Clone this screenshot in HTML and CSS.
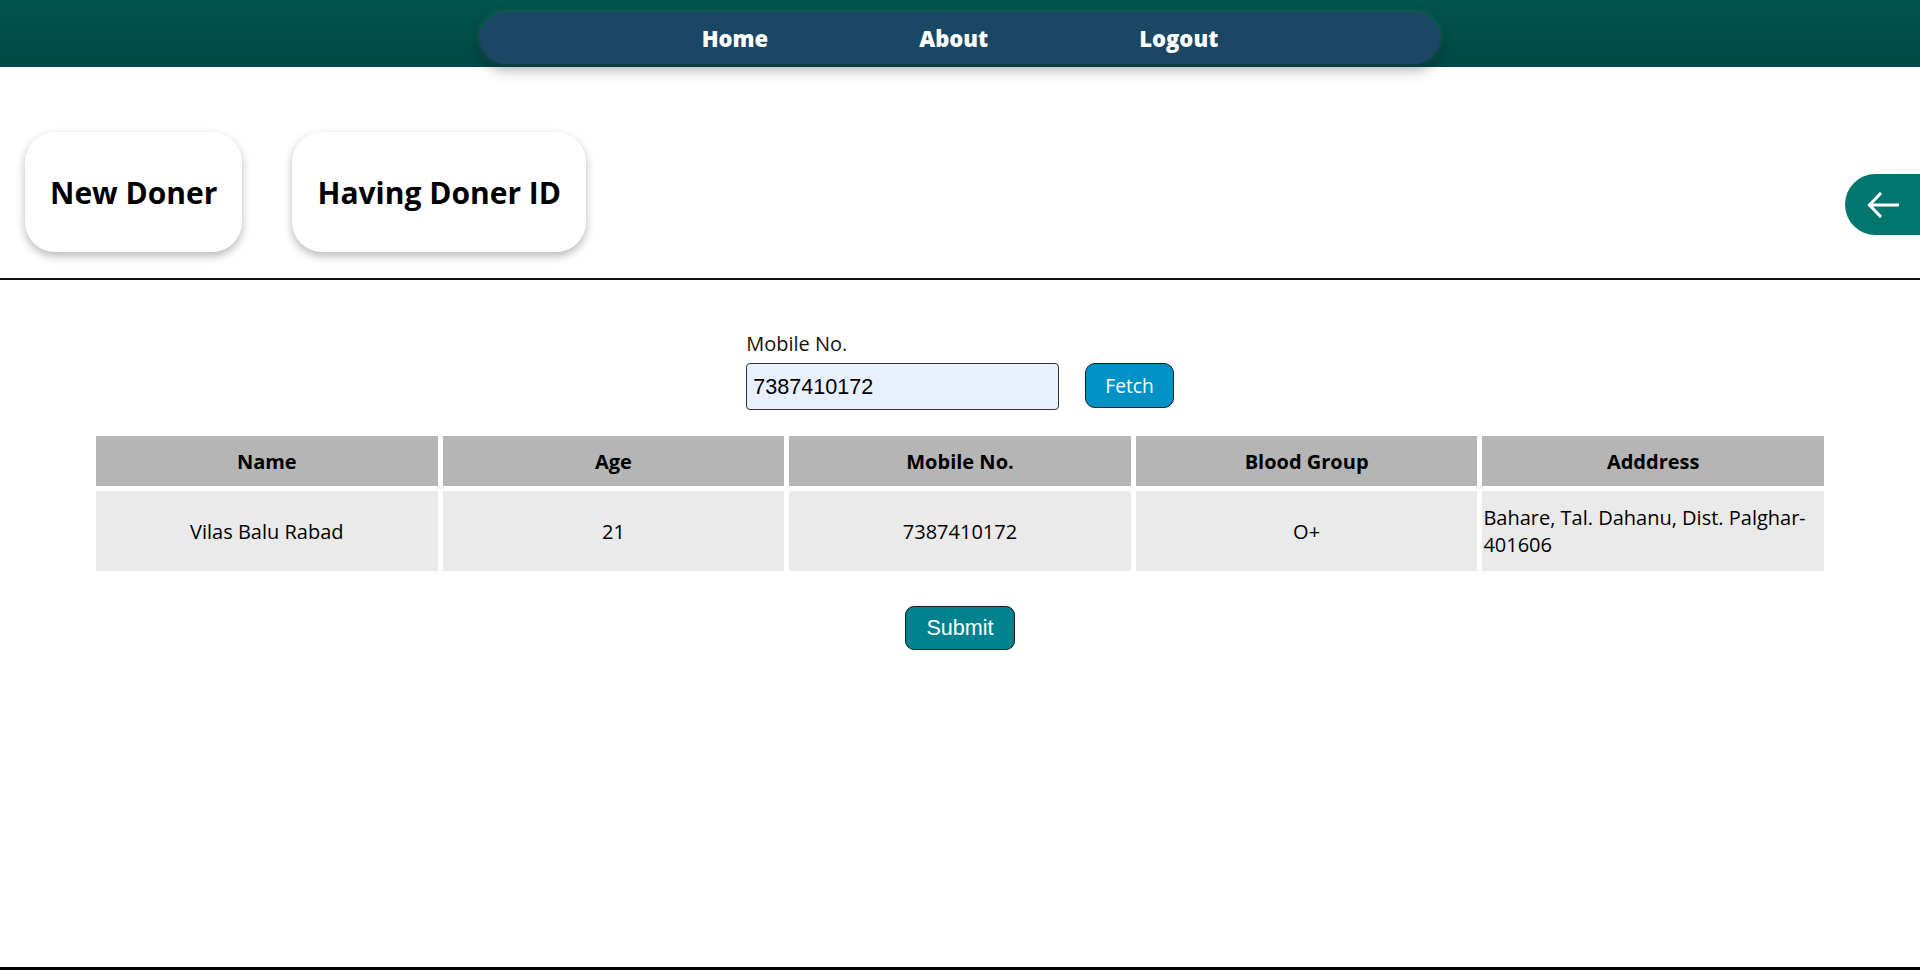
FILE: index.html
```html
<!DOCTYPE html>
<html lang="en">
<head>
<meta charset="utf-8">
<title>Doner</title>
<link rel="stylesheet" href="styles.css">
</head>
<body>
<header class="topbar">
  <nav class="nav-pill">
    <a href="#" class="nav-link">Home</a>
    <a href="#" class="nav-link">About</a>
    <a href="#" class="nav-link">Logout</a>
  </nav>
</header>
<main class="main">
  <section class="options">
    <button class="option-btn">New Doner</button>
    <button class="option-btn">Having Doner ID</button>
    <button class="back-btn" aria-label="Back">
      <svg width="32" height="26" viewBox="0 0 32 26" fill="none" stroke="#fff" stroke-width="3" stroke-linecap="square" stroke-linejoin="miter">
        <path d="M3 13 H31"/>
        <path d="M13 2 L2.5 13 L13 24"/>
      </svg>
    </button>
  </section>
  <section class="fetch-section">
    <div class="fetch-row">
      <div class="field">
        <label class="field-label" for="mobile">Mobile No.</label>
        <input class="field-input" id="mobile" type="text" value="7387410172">
      </div>
      <button class="fetch-btn">Fetch</button>
    </div>
    <table class="data-table">
      <thead>
        <tr>
          <th>Name</th>
          <th>Age</th>
          <th>Mobile No.</th>
          <th>Blood Group</th>
          <th>Adddress</th>
        </tr>
      </thead>
      <tbody>
        <tr>
          <td>Vilas Balu Rabad</td>
          <td>21</td>
          <td>7387410172</td>
          <td>O+</td>
          <td class="addr">Bahare, Tal. Dahanu, Dist. Palghar-401606</td>
        </tr>
      </tbody>
    </table>
    <div class="submit-wrap">
      <button class="submit-btn">Submit</button>
    </div>
  </section>
</main>
<footer class="footer"></footer>
</body>
</html>
```

FILE: styles.css
```css
* { box-sizing: border-box; }

html, body {
  margin: 0;
  padding: 0;
}

body {
  font-family: "Open Sans", "Liberation Sans", sans-serif;
  color: #000;
  background: #fff;
  min-height: 100vh;
  display: flex;
  flex-direction: column;
}

.topbar {
  height: 67px;
  background: linear-gradient(to bottom, #02544f, #004847);
  position: relative;
  z-index: 2;
}

.nav-pill {
  width: 960px;
  height: 52px;
  margin: 12px auto 0;
  background: #1a4764;
  border-radius: 26px;
  display: flex;
  justify-content: center;
  align-items: center;
  gap: 151px;
  box-shadow: 0 6px 14px rgba(0, 0, 0, 0.3), 0 0 6px rgba(120, 160, 140, 0.35);
}

.nav-link {
  color: #fff;
  text-decoration: none;
  font-weight: 800;
  font-size: 22px;
  letter-spacing: 0;
}

.main {
  flex: 1;
}

.options {
  display: flex;
  align-items: flex-start;
  gap: 50px;
  padding: 65px 0 26px 25px;
  border-bottom: 2px solid #111;
}

.option-btn {
  height: 120px;
  padding: 0 25px;
  border: none;
  border-radius: 30px;
  background: #fff;
  font-family: "Open Sans", "Liberation Sans", sans-serif;
  font-weight: 700;
  font-size: 30px;
  color: #000;
  box-shadow: 0 4px 10px rgba(0, 0, 0, 0.28);
  cursor: pointer;
}

.back-btn {
  margin-left: auto;
  margin-top: 42px;
  width: 75px;
  height: 61px;
  border: none;
  border-radius: 31px 0 0 31px;
  background: #00766e;
  display: flex;
  align-items: center;
  justify-content: center;
  padding: 0;
  cursor: pointer;
}

.fetch-section {
  padding-top: 50px;
}

.fetch-row {
  display: flex;
  justify-content: center;
  align-items: flex-end;
  gap: 26px;
}

.field {
  display: flex;
  flex-direction: column;
}

.field-label {
  font-size: 20px;
  line-height: 27px;
  color: #1a1208;
  margin-bottom: 6px;
}

.field-input {
  width: 313px;
  height: 47px;
  border: 1px solid #333;
  border-radius: 4px;
  background: #e8f0fe;
  padding: 0 6px;
  font-family: "Liberation Sans", Arial, sans-serif;
  font-size: 21.6px;
  color: #000;
}

.fetch-btn {
  height: 45px;
  margin-bottom: 2px;
  padding: 0 19px;
  border: 1px solid #1a1a1a;
  border-radius: 10px;
  background: #0092c7;
  color: #fff;
  font-family: "Open Sans", "Liberation Sans", sans-serif;
  font-size: 19.2px;
  cursor: pointer;
}

.data-table {
  width: calc(90% + 10px);
  margin: 21px auto 0;
  border-spacing: 5px;
  table-layout: fixed;
}

.data-table th {
  height: 50px;
  padding: 0 1px;
  background: #b5b5b5;
  font-weight: 700;
  font-size: 20px;
  line-height: 27px;
  text-align: center;
}

.data-table td {
  height: 80px;
  padding: 0 1px;
  background: #eaeaea;
  font-size: 20px;
  line-height: 27px;
  text-align: center;
}

.data-table td.addr {
  text-align: left;
}

.submit-wrap {
  display: flex;
  justify-content: center;
  padding-top: 30px;
}

.submit-btn {
  height: 44px;
  padding: 0 20px;
  border: 1px solid #1a1a1a;
  border-radius: 9px;
  background: #00838f;
  color: #fff;
  font-family: "Liberation Sans", Arial, sans-serif;
  font-size: 21.6px;
  cursor: pointer;
}

.footer {
  height: 0;
  border-top: 3px solid #000;
}
```
